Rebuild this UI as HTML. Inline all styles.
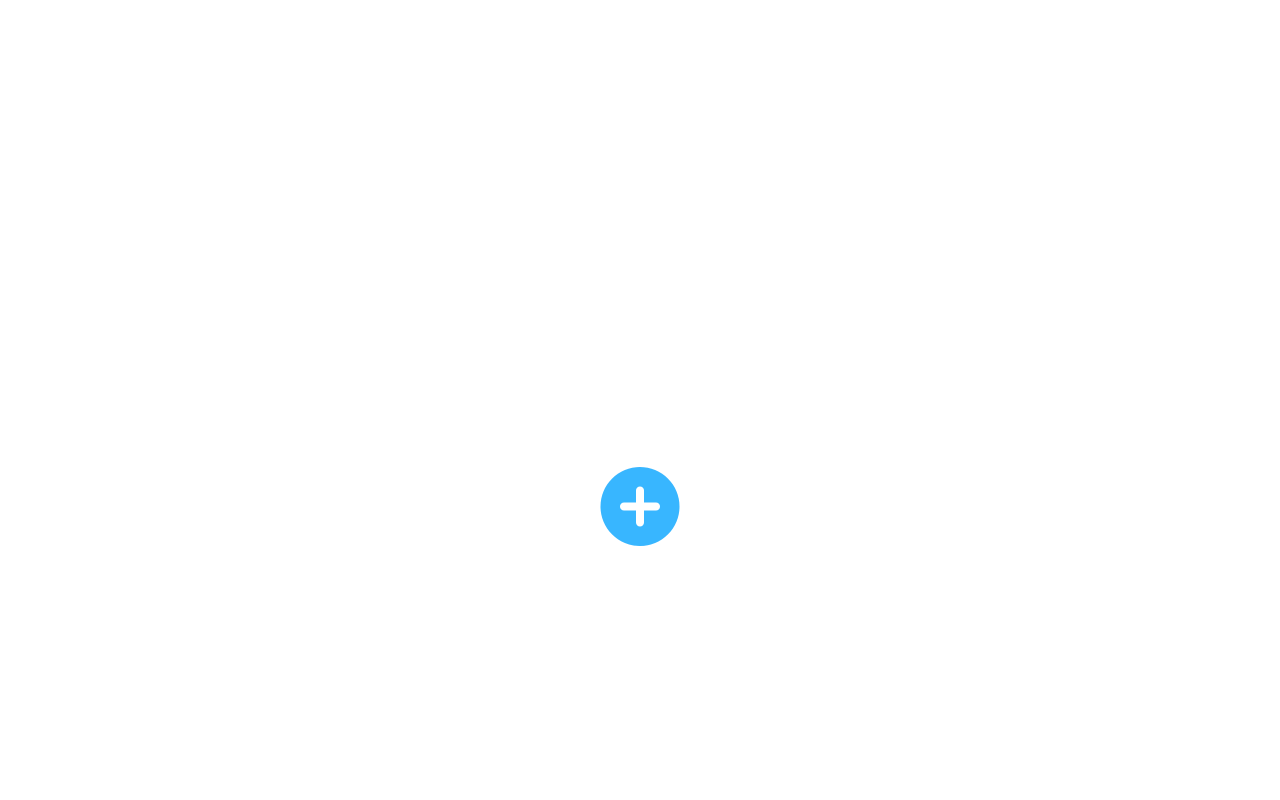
<!DOCTYPE html>
<html><head><style>
html,body{margin:0;padding:0;background:#fff;width:1280px;height:800px;overflow:hidden}
svg{position:absolute;left:0;top:0}
</style></head><body>
<svg width="1280" height="800" viewBox="0 0 1280 800">
<circle cx="640" cy="506.5" r="39.5" fill="#38b6ff"/>
<path d="M624 506.5H656M640 490.5V522.5" stroke="#fff" stroke-width="8" stroke-linecap="round"/>
</svg>
</body></html>
